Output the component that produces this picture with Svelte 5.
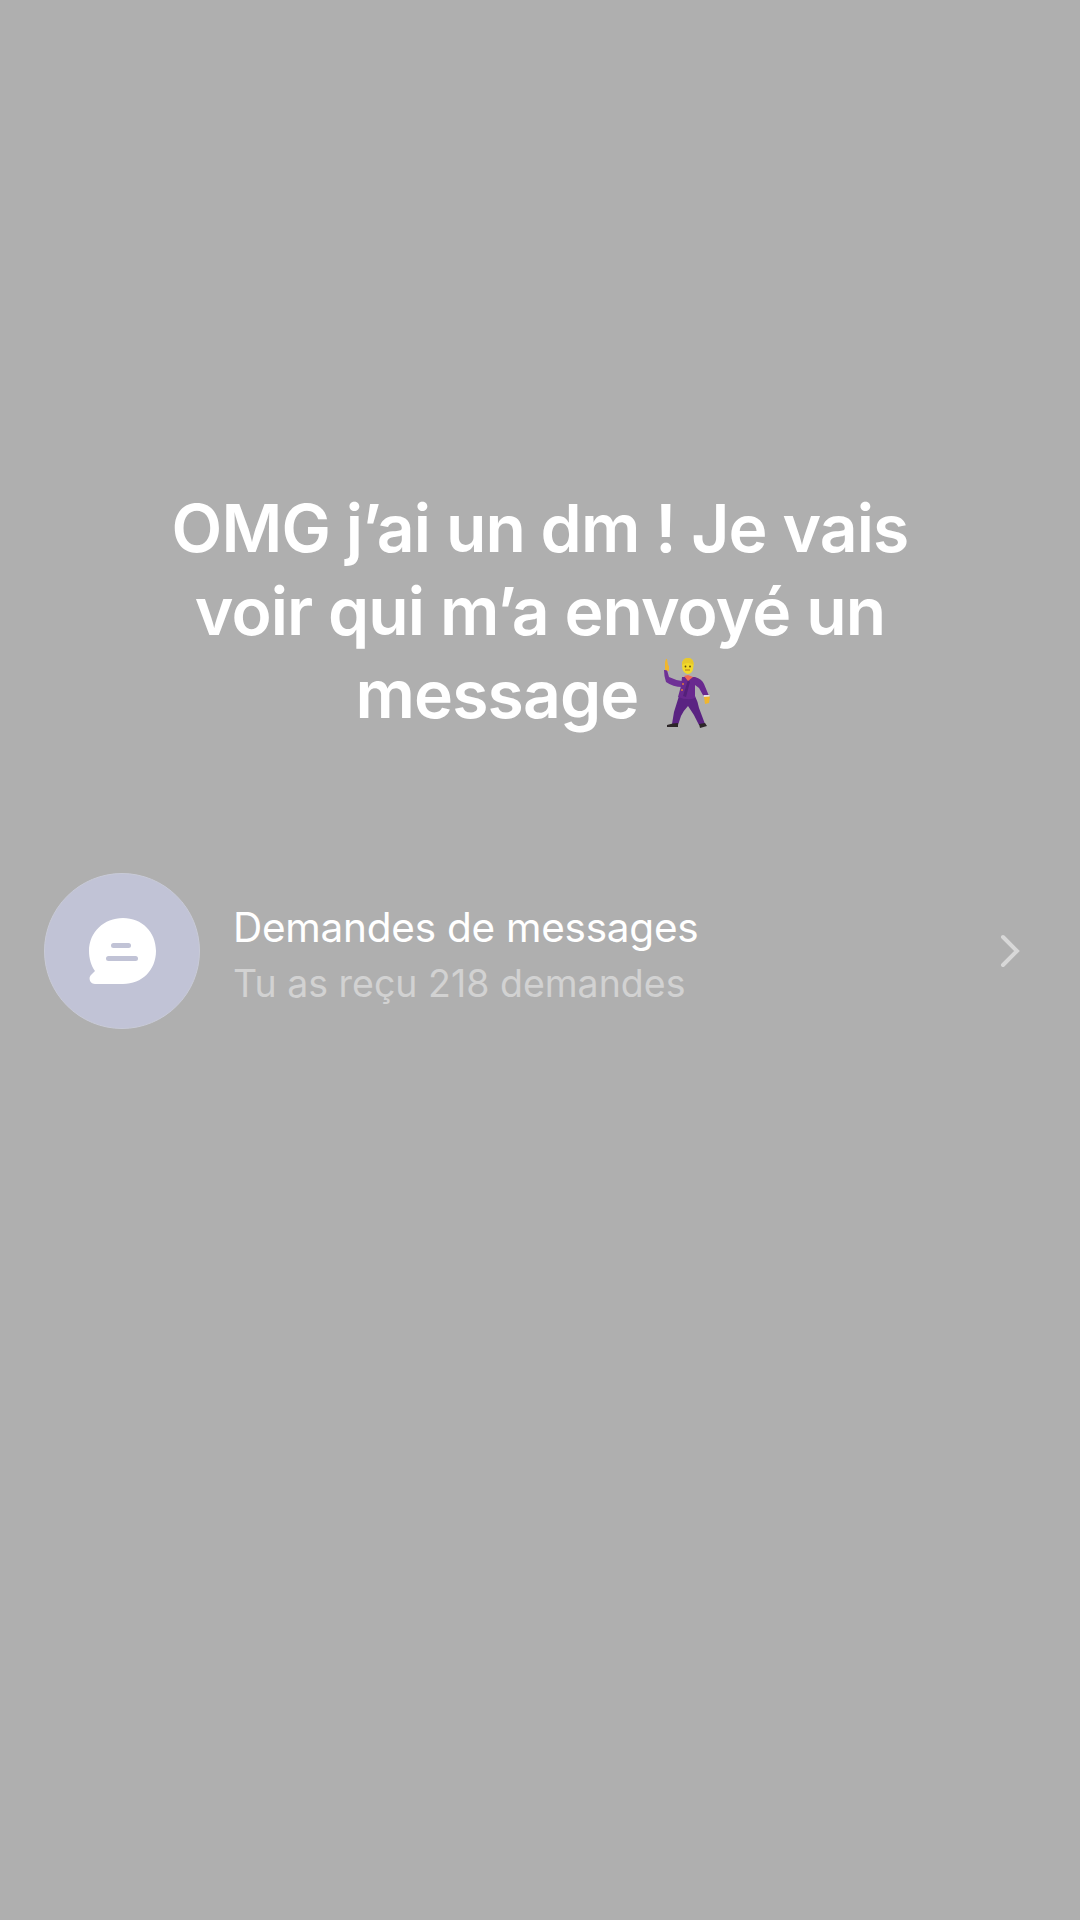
<script lang="ts">
	let requestCount = $state(218);
</script>

<main class="screen">
	<h1 class="title">
		OMG j’ai un dm ! Je vais<br />voir qui m’a envoyé un<br />message<svg class="dancer" viewBox="0 0 90 90" role="img" aria-label="homme qui danse">
			<!-- raised arm -->
			<path d="M27 24 L29 31 Q35 34 42 35 L42 41 Q33 41 26 36 Q24 30 24 24 Z" fill="#6f3196" />
			<path d="M25 24 L25 16 Q26 12 27 13 L28 19 L29 20 L29 25 Z" fill="#f0b62e" />
			<!-- legs -->
			<path d="M39 50 H55 Q58 56 59 62 L65 78 L59 79 Q54 68 48 60 Q44 64 41 70 L38 79 L32 78 L34 66 Z" fill="#5a2382" />
			<!-- jacket -->
			<path d="M42 31 H55 Q62 33 64 38 L69 50 L64 51 L59 42 L55 39 L55 52 Q48 55 38 51 L41 40 Z" fill="#69298f" />
			<path d="M48 34 L43 50 L46 51 L50 36 Z" fill="#54207a" />
			<rect x="63.5" y="49" width="6" height="2" fill="#e4e0e8" />
			<path d="M64 51 L70 50.5 L69 57 L65 58 Z" fill="#f0b62e" />
			<!-- shoes -->
			<path d="M27 79 Q33 77 38 77 L38 81 L27 81 Z" fill="#2c2628" />
			<path d="M59 78 L65 77 L67 80 L60 82 Z" fill="#2c2628" />
			<!-- head -->
			<path d="M42 19 Q42 12 48 12 Q54 12 53.500 20 Q53 28 47.500 28 Q42 27 42 19 Z" fill="#f1d92a" />
			<path d="M42 19 Q42 12 48 12 Q54 12 53.500 19 Q48 15 42 19 Z" fill="#e7c82c" />
			<circle cx="45.500" cy="20.500" r="0.900" fill="#5b4410" />
			<circle cx="50" cy="20.500" r="0.900" fill="#5b4410" />
			<path d="M45 24 H50" stroke="#b5761d" stroke-width="1" />
			<!-- shirt, buttons -->
			<path d="M44 30 L48 29 L53 31 L48 35 Z" fill="#ef6a55" />
			<circle cx="43" cy="38" r="1" fill="#e07a3a" />
			<circle cx="42" cy="44" r="1" fill="#e07a3a" />
		</svg>
	</h1>

	<section class="request-row">
		<div class="avatar">
			<svg viewBox="0 0 67 67" width="67" height="67" aria-hidden="true">
				<path
					d="M34 0 C53 0 67 14 67 33 C67 52 53 66 34 66 H6 C1 66 -1 60 2 57 L6 53 C2 48 0 40 0 33 C0 14 15 0 34 0 Z"
					fill="#fff"
				/>
				<rect x="22" y="25" width="20" height="5" rx="2.5" fill="#c1c3d6" />
				<rect x="17" y="38" width="32" height="5" rx="2.5" fill="#c1c3d6" />
			</svg>
		</div>
		<div class="info">
			<div class="heading">Demandes de messages</div>
			<div class="sub">Tu as reçu {requestCount} demandes</div>
		</div>
		<svg class="chevron" viewBox="0 0 24 40" width="24" height="40" aria-hidden="true">
			<path d="M5 6 L19 20 L5 34" fill="none" stroke="#d8d8d8" stroke-width="4" stroke-linecap="round" />
		</svg>
	</section>
</main>

<style>
	:global(body) {
		margin: 0;
		background: #afafaf;
	}

	.screen {
		height: 1920px;
		box-sizing: border-box;
		padding-top: 487px;
		background: #afafaf;
		font-family: Inter, 'Liberation Sans', sans-serif;
		overflow: hidden;
	}

	.title {
		margin: 0 0 137px;
		text-align: center;
		color: #fff;
		font-size: 66px;
		font-weight: 600;
		line-height: 83px;
		letter-spacing: -0.9px;
	}

	.dancer {
		display: inline-block;
		width: 90px;
		height: 90px;
		margin: -40px -6px -18px 2px;
	}

	.request-row {
		display: flex;
		align-items: center;
		padding: 0 58px 0 44px;
	}

	.avatar {
		width: 156px;
		height: 156px;
		flex-shrink: 0;
		border-radius: 50%;
		background: #c1c3d6;
		border: 1px solid #c9cbd8;
		box-sizing: border-box;
		display: flex;
		align-items: center;
		justify-content: center;
	}

	.info {
		flex: 1;
		margin-left: 33px;
		padding-top: 10px;
	}

	.heading {
		color: #fff;
		font-size: 40.5px;
		line-height: 56px;
		letter-spacing: -0.25px;
	}

	.sub {
		color: #d2d2d2;
		font-size: 37.5px;
		line-height: 56px;
	}

	.chevron {
		flex-shrink: 0;
	}
</style>
